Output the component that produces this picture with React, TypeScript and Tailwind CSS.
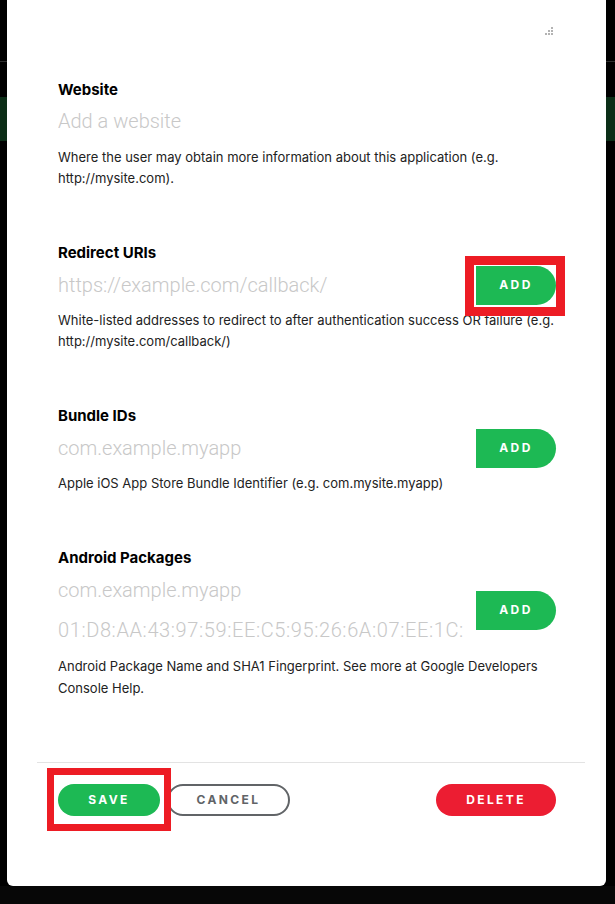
const labelCls = "block text-[15px] leading-5 font-bold text-black";
const inputCls =
  "block h-10 w-full bg-transparent text-[20px] font-light text-[#222] outline-none placeholder:text-[#c8c8c8]";
const descCls = "mt-[5px] text-[13px] leading-[21px] text-[#222]";
const roboto = { fontFamily: "Roboto, sans-serif" };

function AddButton({ highlight }: { highlight?: boolean }) {
  return (
    <button className="relative h-[39px] w-[80px] shrink-0 rounded-r-full bg-[#1db954] text-[12px] font-bold tracking-[0.2em] text-white">
      ADD
      {highlight && (
        <span className="pointer-events-none absolute -top-[10px] -right-[9px] -bottom-[11px] -left-[11px] border-[9px] border-[#ed1c24]" />
      )}
    </button>
  );
}

function ResizeDots() {
  return (
    <svg width="9" height="9" viewBox="0 0 9 9">
      <rect x="6" y="0" width="2" height="2" fill="#b3b3b3" />
      <rect x="3" y="3" width="2" height="2" fill="#b3b3b3" />
      <rect x="6" y="3" width="2" height="2" fill="#b3b3b3" />
      <rect x="0" y="6" width="2" height="2" fill="#b3b3b3" />
      <rect x="3" y="6" width="2" height="2" fill="#b3b3b3" />
      <rect x="6" y="6" width="2" height="2" fill="#b3b3b3" />
    </svg>
  );
}

export default function App() {
  return (
    <div
      className="relative h-[904px] w-[615px] overflow-hidden bg-black"
      style={{ fontFamily: "Inter, 'Noto Sans', sans-serif" }}
    >
      {/* page behind the dialog */}
      <div className="absolute inset-x-0 top-[61px] h-px bg-[#2e2e2e]" />
      <div className="absolute inset-x-0 top-[97px] h-[44px] bg-[#0b2e17]" />
      <div className="absolute inset-x-0 top-[886px] bottom-0 bg-[#070707]" />

      <div className="relative ml-[7px] flex h-[886px] w-[599px] flex-col rounded-b-md bg-white">
        <div className="flex justify-end pt-[27px] pr-[52px]">
          <ResizeDots />
        </div>

        <div className="mt-[44px] flex flex-col gap-[54px] pl-[51px] pr-[50px]">
          <section>
            <label className={labelCls}>Website</label>
            <input className={`${inputCls} mt-[1px]`} placeholder="Add a website" style={roboto} />
            <p className={`${descCls} mt-[6px]`}>
              Where the user may obtain more information about this application (e.g. http://mysite.com).
            </p>
          </section>

          <section>
            <label className={labelCls}>Redirect URIs</label>
            <div className="mt-[2px] flex items-center">
              <input className={inputCls} placeholder="https://example.com/callback/" style={roboto} />
              <AddButton highlight />
            </div>
            <p className={descCls}>
              White-listed addresses to redirect to after authentication success OR failure (e.g.
              http://mysite.com/callback/)
            </p>
          </section>

          <section>
            <label className={labelCls}>Bundle IDs</label>
            <div className="mt-[2px] flex items-center">
              <input className={inputCls} placeholder="com.example.myapp" style={roboto} />
              <AddButton />
            </div>
            <p className={descCls}>Apple iOS App Store Bundle Identifier (e.g. com.mysite.myapp)</p>
          </section>

          <section>
            <label className={labelCls}>Android Packages</label>
            <div className="mt-[2px] flex items-center">
              <div className="flex min-w-0 flex-1 flex-col pr-[12px]">
                <input className={inputCls} placeholder="com.example.myapp" style={roboto} />
                <input
                  className={`${inputCls} tracking-[0.03em]`}
                  placeholder="01:D8:AA:43:97:59:EE:C5:95:26:6A:07:EE:1C:5E:AA:F2:D5:61:2D"
                  style={roboto}
                />
              </div>
              <AddButton />
            </div>
            <p className={`${descCls} leading-[22px]`}>
              Android Package Name and SHA1 Fingerprint. See more at Google Developers Console Help.
            </p>
          </section>
        </div>

        <div className="mt-auto mb-[70px]">
          <div className="ml-[30px] mr-[21px] h-px bg-[#e3e3e3]" />
          <div className="mt-[21px] flex items-center pl-[51px] pr-[50px]">
            <button className="relative h-[32px] w-[102px] rounded-full bg-[#1db954] text-[12px] font-bold tracking-[0.2em] text-white">
              SAVE
              <span className="pointer-events-none absolute -top-[16px] -right-[11px] -bottom-[15px] -left-[11px] border-[7px] border-[#ed1c24]" />
            </button>
            <button className="ml-[7px] h-[32px] w-[123px] rounded-full border-2 border-[#616467] text-[12px] font-bold tracking-[0.2em] text-[#616467]">
              CANCEL
            </button>
            <button className="ml-auto h-[32px] w-[120px] rounded-full bg-[#ec1d32] text-[12px] font-bold tracking-[0.2em] text-white">
              DELETE
            </button>
          </div>
        </div>
      </div>
    </div>
  );
}
